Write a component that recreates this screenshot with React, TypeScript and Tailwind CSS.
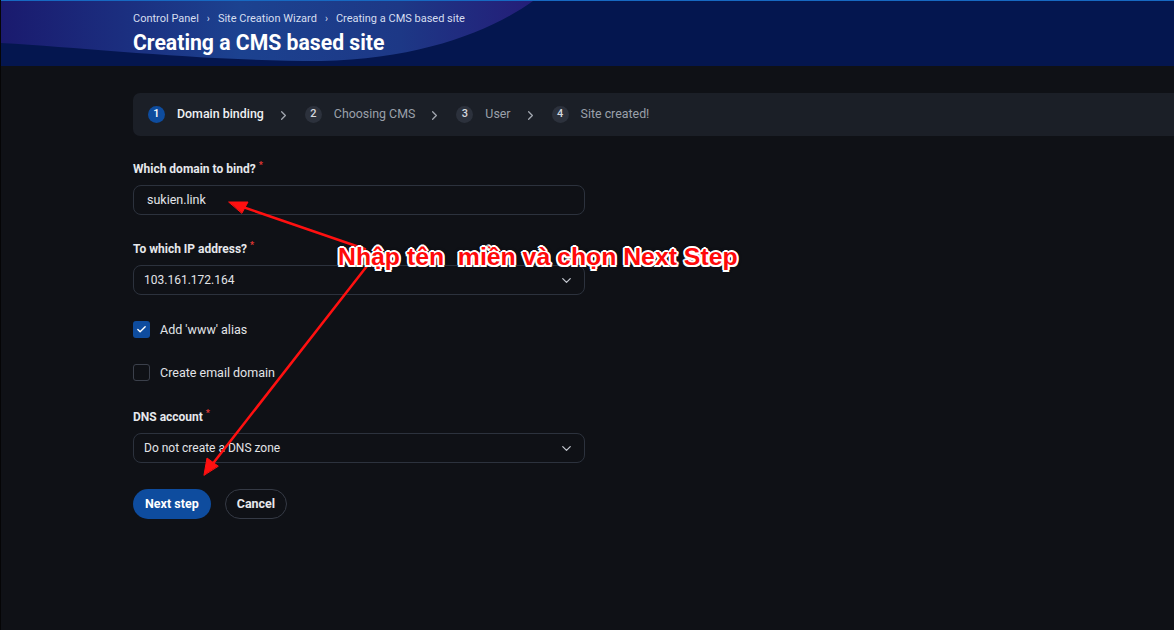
import { Check, ChevronDown, ChevronRight } from "lucide-react";

const steps = [
  { n: 1, label: "Domain binding", active: true },
  { n: 2, label: "Choosing CMS", active: false },
  { n: 3, label: "User", active: false },
  { n: 4, label: "Site created!", active: false },
];

function Label({ text }: { text: string }) {
  return (
    <div className="flex items-start h-[14px] text-[12px] leading-[14px] font-bold text-[#e6e8ec]">
      {text}
      <span className="ml-[3px] -mt-[4px] text-[9px] text-[#e53935]">*</span>
    </div>
  );
}

function Select({ value }: { value: string }) {
  return (
    <div className="mt-[9px] flex items-center justify-between h-[30px] w-[452px] rounded-[8px] border border-[#2c323d] pl-[10px] pr-[10px] text-[12px] text-[#e2e4e8]">
      <span>{value}</span>
      <ChevronDown size={15} strokeWidth={2} className="text-[#c3c7cf]" />
    </div>
  );
}

export default function App() {
  return (
    <div className="relative min-h-[630px] bg-[#0f1116] border-l border-[#050506] font-['Roboto',sans-serif] overflow-hidden">
      {/* Header */}
      <div className="relative h-[66px] bg-[#04164f] border-t border-[#1769c2] overflow-hidden">
        <svg className="absolute left-0 top-0" width="600" height="66" viewBox="0 0 600 66">
          <defs>
            <linearGradient id="hdr" x1="0" y1="0" x2="1" y2="0">
              <stop offset="0" stopColor="#1a1a6e" />
              <stop offset="0.45" stopColor="#1c4290" />
              <stop offset="0.75" stopColor="#1d3886" />
              <stop offset="1" stopColor="#241d78" />
            </linearGradient>
          </defs>
          <path d="M0 0 L532 0 C 490 30 420 58 320 60 C 200 60 90 47 0 42 Z" fill="url(#hdr)" />
        </svg>
        <div className="relative pl-[132px] pt-[11px]">
          <div className="flex items-center gap-[8px] text-[11px] leading-[13px] text-[#d6def0]">
            <span>Control Panel</span>
            <span className="text-[10px]">›</span>
            <span>Site Creation Wizard</span>
            <span className="text-[10px]">›</span>
            <span>Creating a CMS based site</span>
          </div>
          <h1 className="mt-[5px] text-[21.2px] leading-[26px] font-bold text-white">Creating a CMS based site</h1>
        </div>
      </div>

      {/* Stepper */}
      <div className="ml-[132px] mt-[27px] h-[43px] flex items-center rounded-l-[7px] bg-[#1b1f27] pl-[15px]">
        {steps.map((s, i) => (
          <div key={s.n} className="flex items-center">
            <span
              className={`flex items-center justify-center w-[17px] h-[17px] rounded-full text-[11px] font-medium ${
                s.active ? "bg-[#0e4c9e] text-white" : "bg-[#2c313c] text-[#d5d8de]"
              }`}
            >
              {s.n}
            </span>
            <span
              className={`ml-[12px] text-[12.4px] ${s.active ? "font-medium text-[#eef0f3]" : "text-[#9aa0aa]"}`}
            >
              {s.label}
            </span>
            {i < steps.length - 1 && (
              <ChevronRight size={15} strokeWidth={2} className="ml-[12px] mr-[14px] mt-[2px] text-[#a3a8b1]" />
            )}
          </div>
        ))}
      </div>

      {/* Form */}
      <div className="ml-[132px] mt-[26px] w-[452px]">
        <Label text="Which domain to bind?" />
        <div className="mt-[9px] flex items-center h-[30px] rounded-[8px] border border-[#2c323d] pl-[13px] text-[12.5px] text-[#e2e4e8]">
          sukien.link
        </div>

        <div className="mt-[27px]">
          <Label text="To which IP address?" />
        </div>
        <Select value="103.161.172.164" />

        <div className="mt-[26px] flex items-center gap-[10px] h-[17px]">
          <span className="flex items-center justify-center w-[17px] h-[17px] rounded-[3px] bg-[#0e4c9e]">
            <Check size={11} strokeWidth={3} className="text-white" />
          </span>
          <span className="text-[12.5px] leading-[17px] text-[#e2e4e8]">Add 'www' alias</span>
        </div>

        <div className="mt-[26px] flex items-center gap-[10px] h-[17px]">
          <span className="w-[17px] h-[17px] rounded-[3px] border border-[#3b404b]" />
          <span className="text-[12.5px] leading-[17px] text-[#e2e4e8]">Create email domain</span>
        </div>

        <div className="mt-[29px]">
          <Label text="DNS account" />
        </div>
        <Select value="Do not create a DNS zone" />

        <div className="mt-[26px] flex items-center gap-[14px]">
          <button className="h-[30px] px-[12px] rounded-full bg-[#0e4c9e] text-[12.5px] font-bold text-white">
            Next step
          </button>
          <button className="h-[30px] px-[11px] rounded-full border border-[#353a45] text-[12.5px] font-bold text-[#e6e8ec]">
            Cancel
          </button>
        </div>
      </div>

      {/* Annotation arrows */}
      <svg className="absolute left-0 top-0 pointer-events-none" width="1174" height="630" viewBox="0 0 1174 630">
        <g stroke="#ff1010" strokeWidth="2.5" strokeLinecap="round" fill="#ff1010">
          <line x1="364" y1="249" x2="236" y2="205" />
          <path d="M228 202 L247 202 L241 213 Z" strokeWidth="1" strokeLinejoin="round" />
          <line x1="366" y1="266" x2="210" y2="466" />
          <path d="M203 475 L206 458 L217 466 Z" strokeWidth="1" strokeLinejoin="round" />
        </g>
      </svg>
      <div
        className="absolute left-[337px] top-[243px] whitespace-pre font-['Liberation_Sans',Arial,sans-serif] font-bold text-[24.8px] leading-[28px] text-[#ff0a0a] [text-shadow:-2px_0_0_#fff,2px_0_0_#fff,0_-2px_0_#fff,0_2px_0_#fff,-1.5px_-1.5px_0_#fff,1.5px_1.5px_0_#fff,-1.5px_1.5px_0_#fff,1.5px_-1.5px_0_#fff,0_0_4px_#000]"
      >
        Nhập tên  miền và chọn Next Step
      </div>
    </div>
  );
}
